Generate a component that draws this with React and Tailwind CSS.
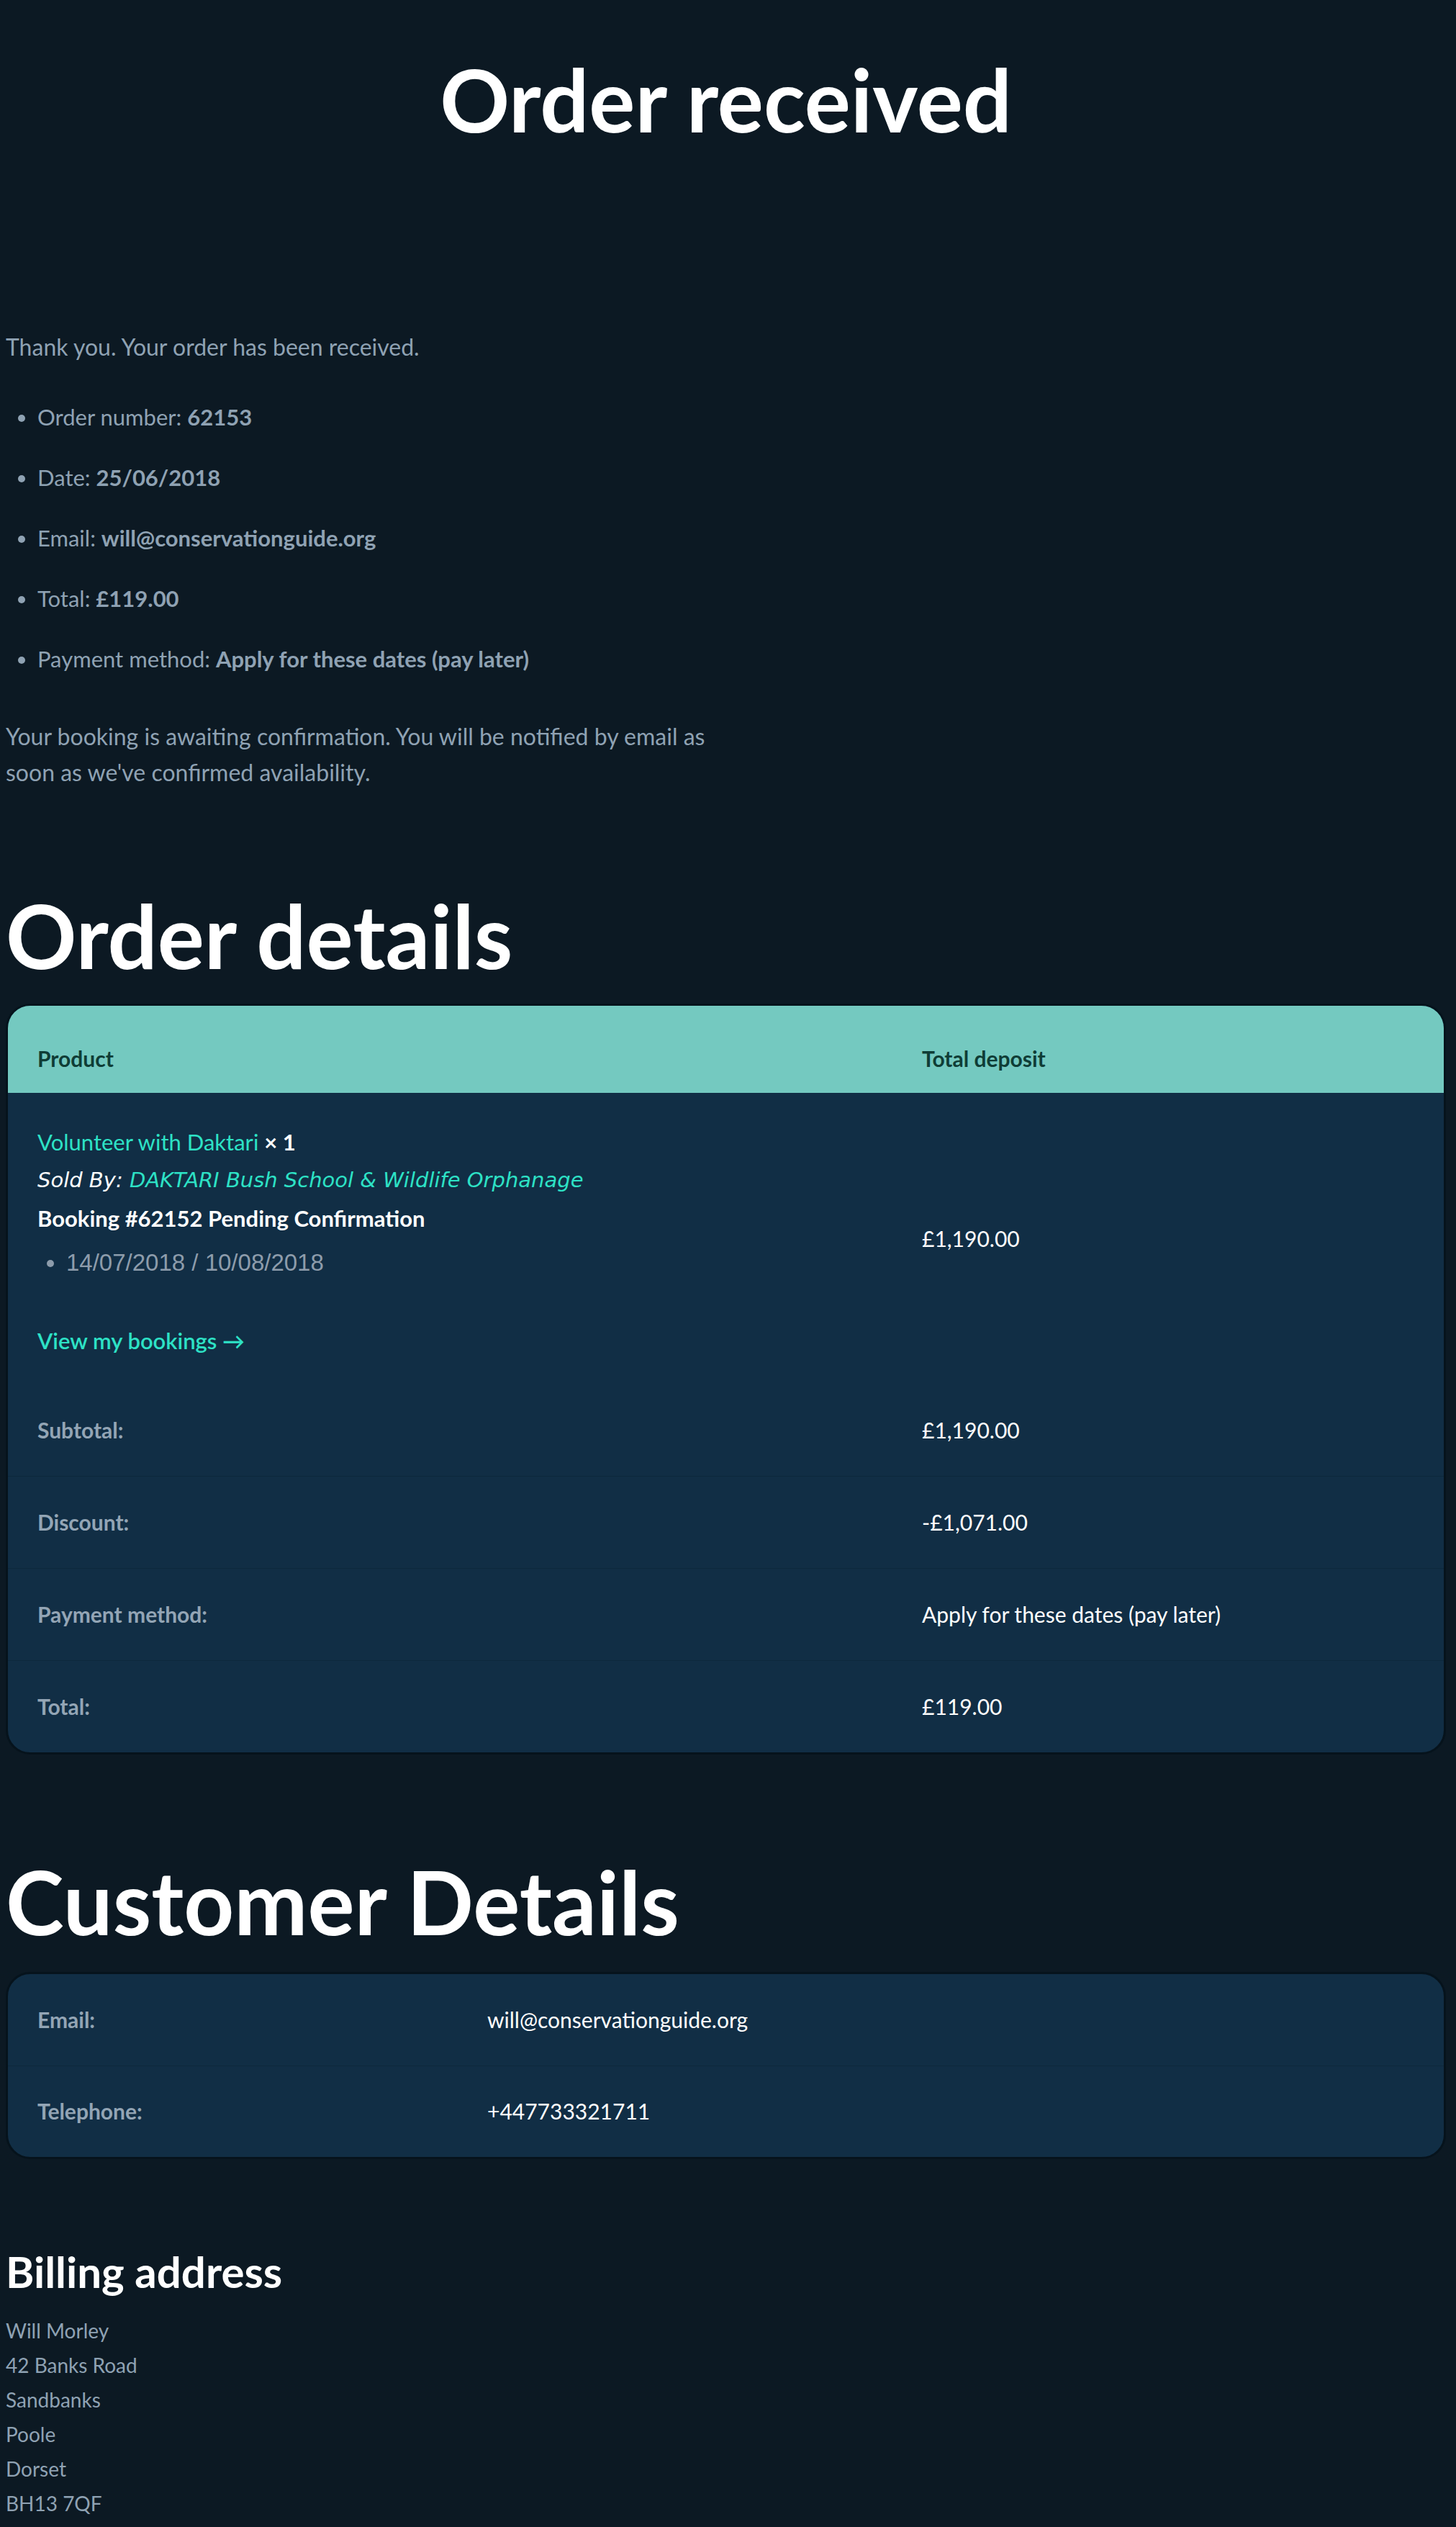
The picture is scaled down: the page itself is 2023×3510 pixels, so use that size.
const summary = [
  ['Order number:', '62153'],
  ['Date:', '25/06/2018'],
  ['Email:', 'will@conservationguide.org'],
  ['Total:', '£119.00'],
  ['Payment method:', 'Apply for these dates (pay later)'],
]

const totals = [
  ['Subtotal:', '£1,190.00'],
  ['Discount:', '-£1,071.00'],
  ['Payment method:', 'Apply for these dates (pay later)'],
  ['Total:', '£119.00'],
]

const address = ['Will Morley', '42 Banks Road', 'Sandbanks', 'Poole', 'Dorset', 'BH13 7QF']

export default function App() {
  return (
    <div className="min-h-screen bg-[#0c1923] pl-[8px] pr-[14px] pb-[8px] font-['Lato','Open_Sans',sans-serif] text-[30px] text-[#8fa2b3]">
      {/* Page title */}
      <h1 className="pt-[66px] text-center text-[120px] font-bold leading-[1.2] text-white">
        Order received
      </h1>

      {/* Order overview */}
      <p className="mt-[246px] text-[32px] leading-[51px]">Thank you. Your order has been received.</p>
      <ul className="mt-[47px] flex list-disc flex-col gap-[33px] pl-[44px] text-[31px] marker:text-[#8fa2b3]">
        {summary.map(([label, value]) => (
          <li key={label} className="leading-[51px]">
            {label} <strong className="font-bold">{value}</strong>
          </li>
        ))}
      </ul>
      <p className="mt-[57px] max-w-[1030px] text-[32px] leading-[50px]">
        Your booking is awaiting confirmation. You will be notified by email as soon as we've confirmed availability.
      </p>

      {/* Order details */}
      <h2 className="mt-[128px] text-[122px] font-bold leading-[1.2] text-white">Order details</h2>
      <div className="mt-[22px] overflow-hidden rounded-[34px] border-[3px] border-[#06131c] bg-[#112e45]">
        <div className="grid grid-cols-[1229px_1fr] bg-[#74c9c0] font-bold text-[#0f3d36]">
          <div className="pb-[22px] pl-[41px] pt-[48px] leading-[51px]">Product</div>
          <div className="pb-[22px] pl-[41px] pt-[48px] leading-[51px]">Total deposit</div>
        </div>

        <div className="grid grid-cols-[1229px_1fr]">
          <div className="pb-[33px] pl-[41px] pt-[42px] text-[31px]">
            <div className="leading-[53px]">
              <a className="text-[#2de2c6]">Volunteer with Daktari</a>{' '}
              <strong className="font-bold text-white">× 1</strong>
            </div>
            <div className="font-['DejaVu_Sans',sans-serif] text-[29px] italic leading-[53px]">
              <span className="text-white">Sold By: </span>
              <a className="text-[#2de2c6]">DAKTARI Bush School &amp; Wildlife Orphanage</a>
            </div>
            <div className="font-bold leading-[53px] text-white">Booking #62152 Pending Confirmation</div>
            <ul className="mt-[8px] list-disc pl-[40px] font-['Liberation_Sans',Arial,sans-serif] text-[33px] leading-[53px] text-[#8d9cab]">
              <li>14/07/2018 / 10/08/2018</li>
            </ul>
            <a className="mt-[56px] block font-semibold leading-[53px] text-[#2de2c6]">View my bookings →</a>
          </div>
          <div className="flex items-center pl-[41px] text-white">£1,190.00</div>
        </div>

        {totals.map(([label, value], i) => (
          <div
            key={label}
            className={
              i === 0
                ? 'grid h-[128px] grid-cols-[1229px_1fr] items-center'
                : 'grid h-[128px] grid-cols-[1229px_1fr] items-center border-t border-[#0d283c]'
            }
          >
            <div className="pl-[41px] font-bold text-[#93a5b5]">{label}</div>
            <div className="pl-[41px] text-white">{value}</div>
          </div>
        ))}
      </div>

      {/* Customer details */}
      <h2 className="mt-[131px] text-[122px] font-bold leading-[1.2] text-white">Customer Details</h2>
      <div className="mt-[24px] overflow-hidden rounded-[34px] border-[3px] border-[#06131c] bg-[#112e45]">
        <div className="grid h-[127px] grid-cols-[666px_1fr] items-center">
          <div className="pl-[41px] font-bold text-[#93a5b5]">Email:</div>
          <div className="text-white">will@conservationguide.org</div>
        </div>
        <div className="grid h-[127px] grid-cols-[666px_1fr] items-center border-t border-[#0d283c]">
          <div className="pl-[41px] font-bold text-[#93a5b5]">Telephone:</div>
          <div className="text-white">+447733321711</div>
        </div>
      </div>

      {/* Billing address */}
      <h2 className="mt-[120px] text-[60px] font-bold leading-[72px] text-white">Billing address</h2>
      <address className="mt-[22px] text-[28px] not-italic leading-[48px]">
        {address.map((line) => (
          <div key={line}>{line}</div>
        ))}
      </address>
    </div>
  )
}
